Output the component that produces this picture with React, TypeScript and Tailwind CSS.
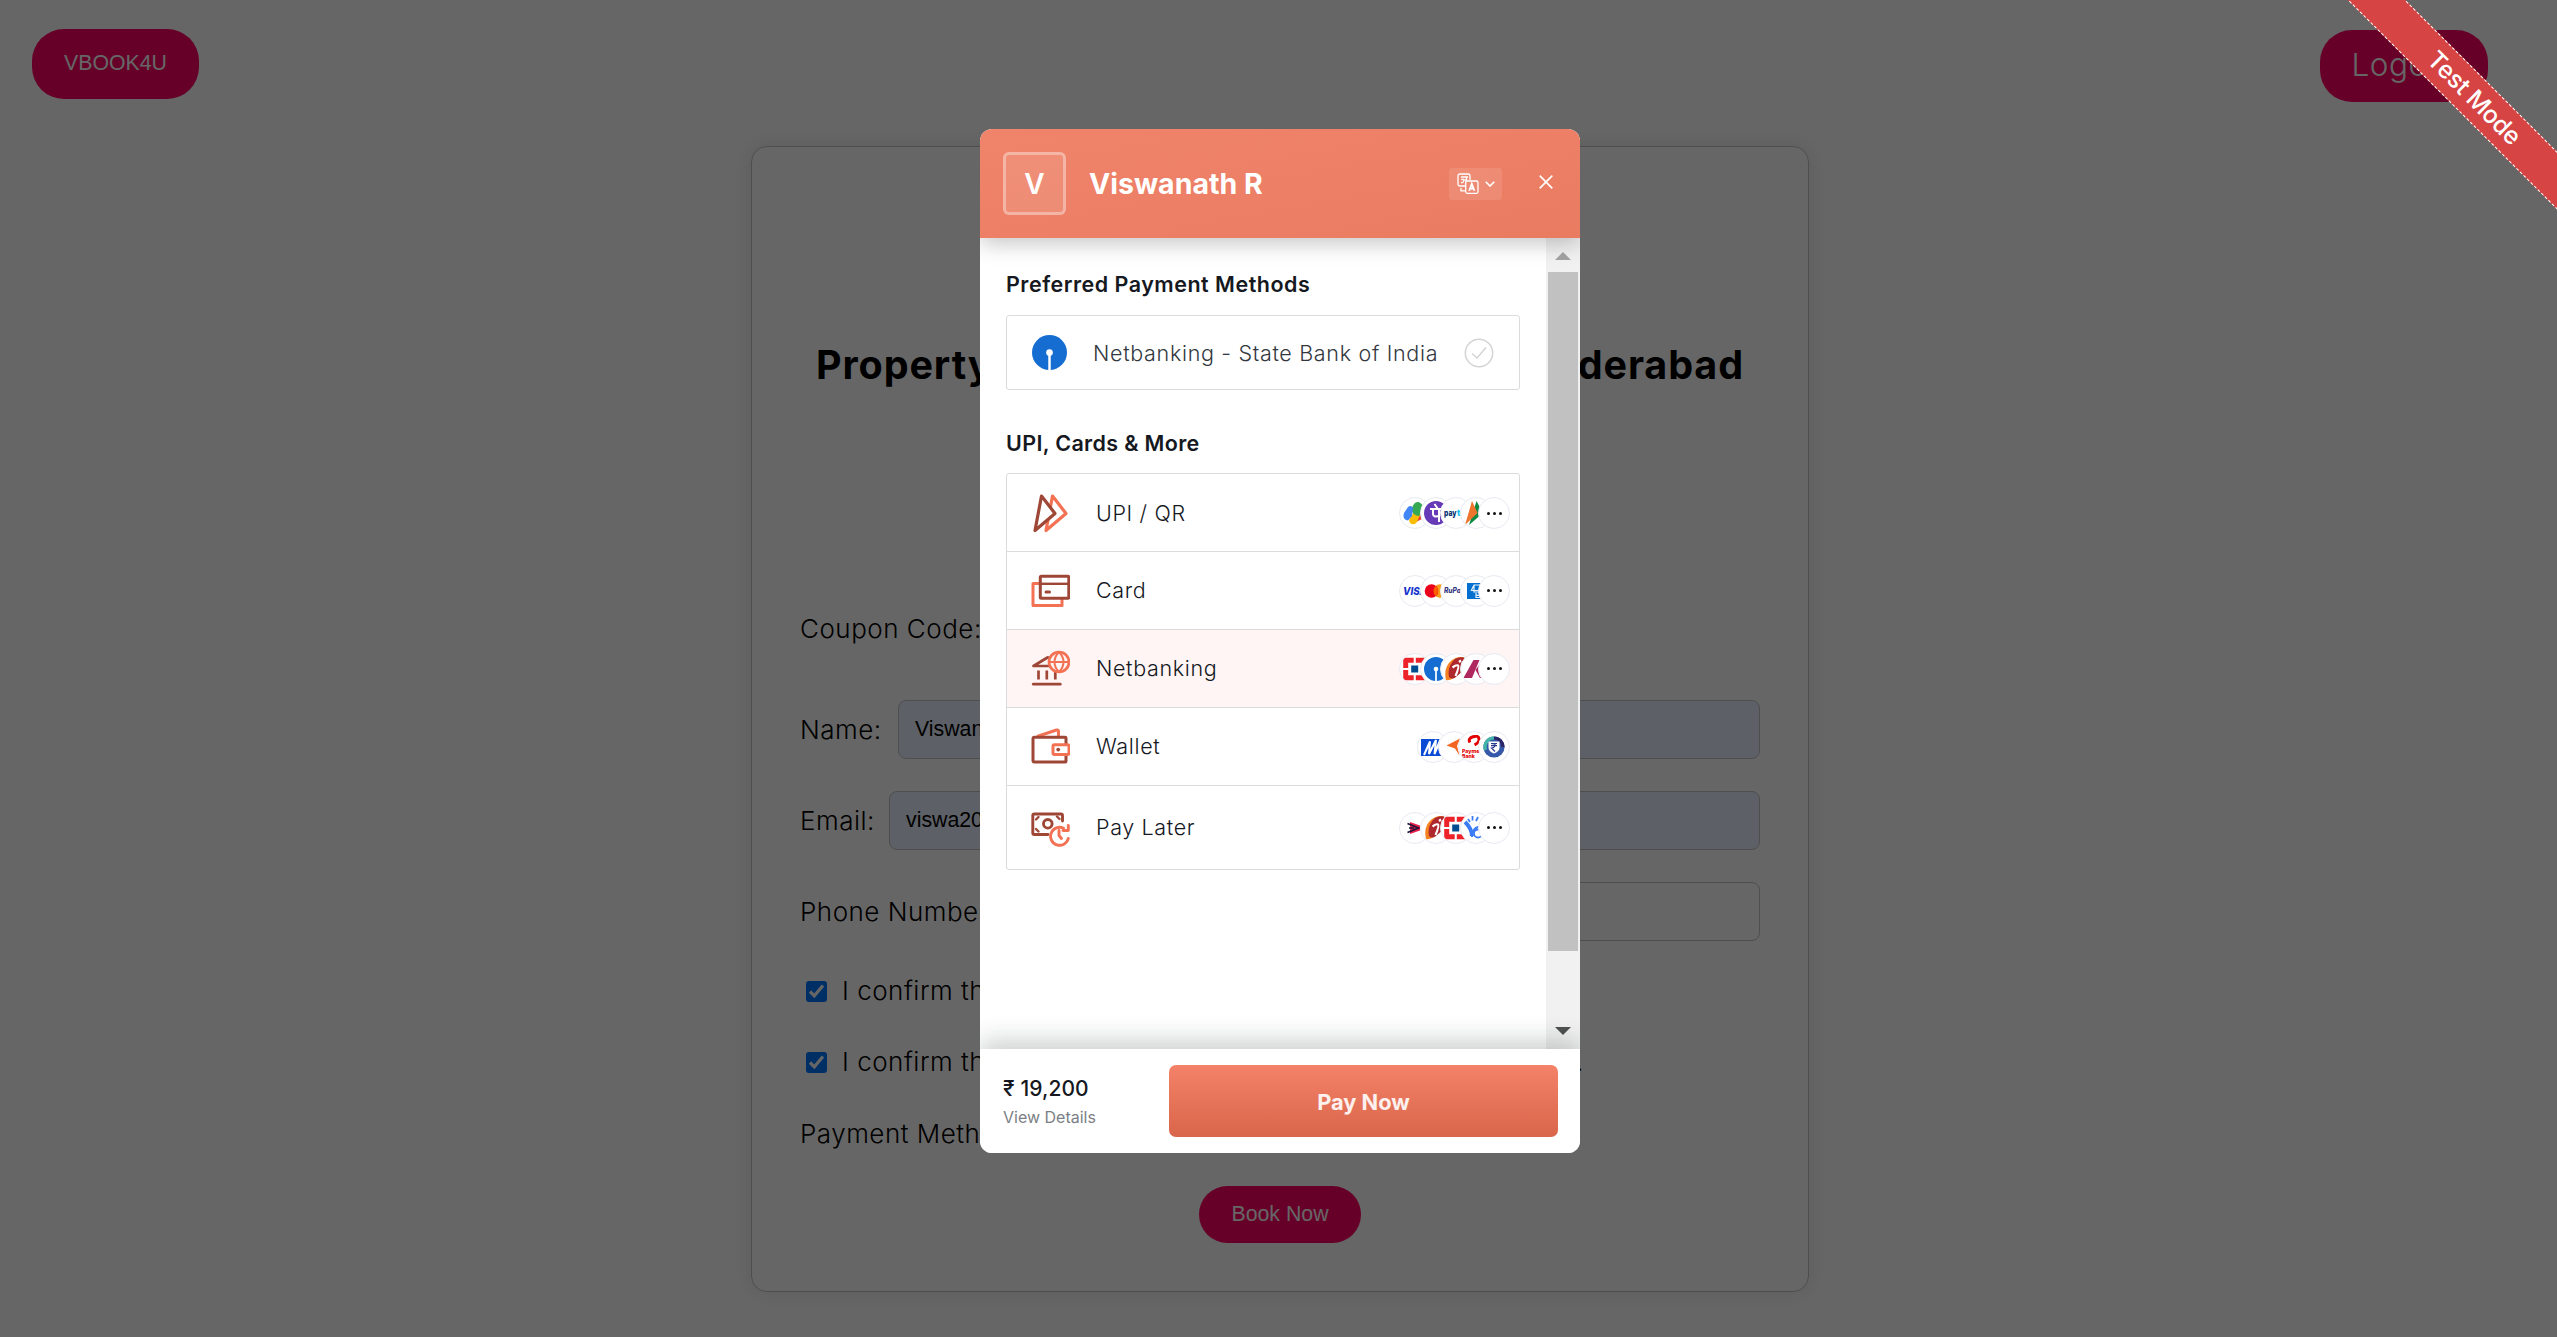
import React from "react";

const DK = "#9f4737";
const OR = "#f37254";

function Pill({ children, className }: { children: React.ReactNode; className: string }) {
  return (
    <div className={`flex items-center justify-center rounded-[32px] bg-[#ff0066] text-white ${className}`}>
      {children}
    </div>
  );
}

function Check() {
  return (
    <span className="flex size-[21px] items-center justify-center rounded-[3px] bg-[#0075ff]">
      <svg width="21" height="21" viewBox="0 0 21 21" fill="none" stroke="#fff" strokeWidth="3.200">
        <path d="M4 10.500l4.300 4.300L17 4.500" />
      </svg>
    </span>
  );
}

const label = "font-light text-[26px] leading-[38px] tracking-[0.5px] whitespace-nowrap";

function UpiIcon() {
  return (
    <svg width="40" height="40" viewBox="0 0 40 40" fill="none" strokeWidth="3.200" strokeLinejoin="round">
      <path d="M22.500 3L36 20.500 16 37.500z" stroke={OR} />
      <path d="M11.500 3L25 20.500 5 37.500z" stroke={DK} fill="#fff" />
    </svg>
  );
}
function CardIcon() {
  return (
    <svg width="40" height="40" viewBox="0 0 40 40" fill="none" strokeWidth="3" strokeLinejoin="round">
      <path d="M9 12.500H3V34.500H32V28" stroke={OR} />
      <rect x="10.300" y="5.300" width="28.500" height="22" rx="1" stroke={DK} />
      <path d="M10 12.800h29" stroke={DK} strokeWidth="2.400" />
      <path d="M16 21h3.500" stroke={DK} strokeLinecap="round" />
    </svg>
  );
}
function BankIcon() {
  return (
    <svg width="40" height="40" viewBox="0 0 40 40" fill="none" strokeWidth="2.700">
      <path d="M17.500 8.500L3.500 17H19M17.500 8.500h2" stroke={DK} strokeLinecap="round" strokeLinejoin="round" />
      <path d="M8.500 21.500v9M16.800 21.500v9M25.300 23v7.500" stroke={DK} />
      <path d="M3.300 35.200h27" stroke={DK} strokeLinecap="round" />
      <circle cx="29" cy="13" r="10" stroke={OR} />
      <path d="M19 13h20M29 3c-6 6-6 14 0 20M29 3c6 6 6 14 0 20" stroke={OR} strokeWidth="2" />
    </svg>
  );
}
function WalletIcon() {
  return (
    <svg width="40" height="40" viewBox="0 0 40 40" fill="none" strokeWidth="3" strokeLinejoin="round">
      <path d="M7 9.500L26.500 3Q28.500 2.500 28.500 4.500V10" stroke={OR} />
      <path d="M36 18V11Q36 10.300 35 10.300H4.500Q3 10.300 3 12V33.500Q3 35 4.500 35H35Q36 35 36 34V27" stroke={DK} />
      <rect x="23" y="17.700" width="16" height="9.800" rx="1.500" stroke={OR} />
      <circle cx="28.200" cy="22.600" r="1.900" fill={DK} />
    </svg>
  );
}
function LaterIcon() {
  return (
    <svg width="40" height="40" viewBox="0 0 40 40" fill="none" strokeWidth="2.900" strokeLinecap="round" strokeLinejoin="round">
      <path d="M18 26.500H4.300Q2.800 26.500 2.800 25V7.500Q2.800 6 4.300 6H31Q32.500 6 32.500 7.500V13" stroke={DK} />
      <circle cx="17.800" cy="15.800" r="4.300" stroke={DK} />
      <path d="M6 11.500L8.500 9M6 21L8.500 23.500M27 8.500L29.500 11" stroke={DK} strokeWidth="2.400" />
      <path d="M33.500 20.200A9 9 0 1 0 38.300 30.500" stroke={OR} />
      <path d="M38.300 17.500V22.500H33" stroke={OR} />
      <path d="M29 22.500V27.500L31.500 30.500" stroke={OR} />
    </svg>
  );
}

/* 24 x 24 brand marks drawn inside the round badges */
const marks: Record<string, React.ReactNode> = {
  gpay: (
    <g>
      <path d="M15 12L19 8v10l-6 3z" fill="#ea4335" />
      <path d="M6 19L12 9h7l-5 12q-3 4-7 1z" fill="#fbbc04" />
      <path d="M8 8L11 3q3-3.500 7-.5t1 7L16 15q-6 0-8-7z" fill="#34a853" />
      <path d="M1 12l4-6q3-2.500 5 1l-1 8-4 4.500q-6-1-4-7.500z" fill="#4285f4" />
    </g>
  ),
  phonepe: (
    <g>
      <circle cx="12" cy="12" r="12" fill="#673ab7" />
      <path d="M6 8H18M15 8V21M9 8V13q0 3.500 6 2M10.500 3l3.500 5" stroke="#fff" strokeWidth="2" fill="none" />
    </g>
  ),
  paytm: (
    <g fontFamily="Inter, sans-serif" fontWeight="800" fontSize="9">
      <text x="0" y="15" fill="#002e6e" textLength="12.500" lengthAdjust="spacingAndGlyphs">pay</text>
      <text x="13" y="15" fill="#00b9f1" textLength="11" lengthAdjust="spacingAndGlyphs">tm</text>
    </g>
  ),
  bhim: (
    <g>
      <path d="M12.500 0L19 12L5 24z" fill="#0e8a43" />
      <path d="M8 0L13.500 12L1 24z" fill="#ed752e" />
    </g>
  ),
  visa: (
    <text x="0" y="15.800" fontFamily="Inter, sans-serif" fontStyle="italic" fontWeight="800" fontSize="10.500" fill="#1434cb" textLength="24" lengthAdjust="spacingAndGlyphs">VISA</text>
  ),
  master: (
    <g>
      <circle cx="16" cy="12" r="6.800" fill="#f79e1b" />
      <circle cx="7.500" cy="12" r="6.800" fill="#eb001b" />
      <path d="M11.700 6.800a7 7 0 0 1 0 10.400a7 7 0 0 1 0-10.400z" fill="#ff5f00" />
    </g>
  ),
  rupay: (
    <text x="0" y="14" fontFamily="Inter, sans-serif" fontStyle="italic" fontWeight="800" fontSize="7" fill="#30347e" textLength="21" lengthAdjust="spacingAndGlyphs">RuPay</text>
  ),
  amex: (
    <g>
      <rect x="3" y="4" width="16" height="16" fill="#006fcf" />
      <path d="M7 12l3-6h6M10 6.500v6.500h6M8 11.500h8M12 14v4.500h5M12 16.300h4" stroke="#fff" strokeWidth="1.200" fill="none" opacity=".9" />
    </g>
  ),
  kotak: (
    <g>
      <path d="M2.700 11V3.200H10.700M12.800 3.200H20.800V11M20.800 13V20.800H12.800M10.700 20.800H2.700V13" stroke="#ed232a" strokeWidth="5" fill="none" />
      <rect x="8.200" y="8.500" width="7" height="7" fill="#004c8f" />
    </g>
  ),
  sbi: (
    <g>
      <circle cx="12" cy="12" r="12" fill="#156dd2" />
      <circle cx="12" cy="12" r="2.300" fill="#fff" />
      <path d="M12 13v11" stroke="#fff" strokeWidth="1.700" />
    </g>
  ),
  icici: (
    <g>
      <path d="M2 23Q-1 10 8 3Q14-1 20 0L13 18Q8 24 2 23z" fill="#f58220" />
      <path d="M5 20Q3 9 11 2Q16-1 21 1V12L12 20Q8 23 5 20z" fill="#ae282e" />
      <path d="M15 5l2-1.500M8.500 10.500q4-3 5.500-2T11.500 19" stroke="#fff" strokeWidth="2.200" fill="none" />
    </g>
  ),
  axis: (
    <g>
      <path d="M9.500 3H15.500L8 21H-.5z" fill="#ae275f" />
      <path d="M11.500 13L15 8 21 21H16z" fill="#ae275f" />
    </g>
  ),
  mobikwik: (
    <g>
      <path d="M0 4H22V21H0z" fill="#0a4bd6" />
      <path d="M3 20L9 6.500L8 19L15 5L13.500 19L20 3" stroke="#fff" strokeWidth="2" fill="none" />
    </g>
  ),
  freecharge: <path d="M4.500 10.500L18 3.500L15 11l2.500 9.500-4.500-7z" fill="#f26522" />,
  airtel: (
    <g>
      <path d="M8 7.500Q5.500 3.500 11 1.800t6 2-4.500 6" stroke="#e40000" strokeWidth="3" fill="none" />
      <g fontFamily="Inter, sans-serif" fontWeight="800" fontSize="5.200" fill="#e40000">
        <text x="0" y="17.500">Payments</text>
        <text x="0" y="22.800">Bank</text>
      </g>
    </g>
  ),
  payzapp: (
    <g>
      <circle cx="12" cy="12" r="10.600" fill="#3558a8" />
      <path d="M12 3A9 9 0 0 1 21 12" stroke="#2b2566" strokeWidth="3.200" fill="none" />
      <path d="M3.500 15A9 9 0 0 1 12 3" stroke="#42b5a8" strokeWidth="3.200" fill="none" />
      <path d="M6.500 6.500H17.500V13Q17 16.500 12 18.500Q7 16.500 6.500 13z" fill="#fff" />
      <path d="M9 8.500h6M9 10.700h6M9 8.500q5 0 4 2.200T9.500 13l3.500 3.500" stroke="#2b3a8f" strokeWidth="1.200" fill="none" />
    </g>
  ),
  lazy: (
    <g>
      <path d="M7 6L17 9.500v5L7 18z" fill="#e91e4f" />
      <path d="M4.500 7.500L15.500 12L4.500 16.500M6 12h5" stroke="#1b1233" strokeWidth="1.600" fill="none" />
    </g>
  ),
  yono: (
    <g stroke="#3b7cf5" fill="none">
      <path d="M4 3L6 6M8.500 0v4.500M14 1L12 5" strokeWidth="1.800" />
      <path d="M1 6q7 7 7 14" strokeWidth="4" />
      <circle cx="14" cy="17.500" r="4" strokeWidth="1.800" />
      <path d="M8 21Q8 10.500 18 10.500" strokeWidth="2" />
    </g>
  ),
};

function Badges({ names, more = true }: { names: string[]; more?: boolean }) {
  return (
    <div className="flex items-center">
      {names.map((n, i) => (
        <span
          key={n}
          className={`flex size-8 items-center justify-center overflow-hidden rounded-full border border-[#e8eaf2] bg-white ${i === 0 ? "" : i === 1 ? "-ml-[11px]" : "-ml-[12px]"}`}
        >
          <svg className="shrink-0" width="24" height="24" viewBox="0 0 24 24">{marks[n]}</svg>
        </span>
      ))}
      {more && (
        <span className="-ml-[14px] flex size-8 items-center justify-center gap-[3px] rounded-full border border-[#e8eaf2] bg-white">
          <i className="size-[3px] rounded-full bg-[#111]" />
          <i className="size-[3px] rounded-full bg-[#111]" />
          <i className="size-[3px] rounded-full bg-[#111]" />
        </span>
      )}
    </div>
  );
}

const rows = [
  { t: "UPI / QR", icon: <UpiIcon />, b: ["gpay", "phonepe", "paytm", "bhim"], more: true, h: "h-[77px] pt-px" },
  { t: "Card", icon: <CardIcon />, b: ["visa", "master", "rupay", "amex"], more: true, h: "h-[78px]" },
  { t: "Netbanking", icon: <BankIcon />, b: ["kotak", "sbi", "icici", "axis"], more: true, h: "h-[78px]" },
  { t: "Wallet", icon: <WalletIcon />, b: ["mobikwik", "freecharge", "airtel", "payzapp"], more: false, h: "h-[78px]" },
  { t: "Pay Later", icon: <LaterIcon />, b: ["lazy", "icici", "kotak", "yono"], more: true, h: "h-[84px]" },
];

function Page() {
  return (
    <div className="h-full bg-white">
      <header className="flex h-[146px] items-start justify-between pl-8 pr-[69px]">
        <Pill className="mt-[29px] h-[70px] w-[167px] pb-px font-['Liberation_Sans',sans-serif] text-[21.300px]">VBOOK4U</Pill>
        <Pill className="mt-[30px] h-[72px] w-[168px] pb-[2px] text-[31.500px] font-light tracking-[0.5px]">Logout</Pill>
      </header>
      <div className="ml-[751px] flex h-[1146px] w-[1058px] flex-col rounded-[16px] border border-[#c4c4c4] px-12 shadow-[0_0_20px_rgba(0,0,0,0.1)]">
        <h1 className="mt-[190px] flex h-[58px] items-center justify-between pl-[16px] pr-[16px] text-[39.500px] font-bold tracking-[0.9px]">
          <span>Property</span>
          <span>Hyderabad</span>
        </h1>
        <div className={`mt-[215px] ${label}`}>Coupon Code:</div>
        <div className="mt-[52px] flex h-[59px] items-center justify-between">
          <span className={label}>Name:</span>
          <div className="flex h-full w-[862px] items-center rounded-[8px] border border-[#c4c4c4] bg-[#e8f0fe] px-4 font-['Liberation_Sans',sans-serif] text-[21.300px]">Viswanath</div>
        </div>
        <div className="mt-[32px] flex h-[59px] items-center justify-between">
          <span className={label}>Email:</span>
          <div className="flex h-full w-[871px] items-center rounded-[8px] border border-[#c4c4c4] bg-[#e8f0fe] px-4 font-['Liberation_Sans',sans-serif] text-[21.300px]">viswa20</div>
        </div>
        <div className="mt-[32px] flex h-[59px] items-center justify-between">
          <span className={label}>Phone Number:</span>
          <div className="h-full w-[760px] rounded-[8px] border border-[#c4c4c4] bg-white" />
        </div>
        <div className="mt-[31px] flex h-[38px] items-center gap-[15px] pl-[6px]">
          <Check />
          <span className={label}>I confirm that</span>
        </div>
        <div className="mt-[33px] flex h-[38px] items-center gap-[15px] pl-[6px]">
          <Check />
          <span className={label}>I confirm that</span>
          <span className={`ml-auto w-[184px] ${label}`}>.</span>
        </div>
        <div className={`mt-[34px] ${label}`}>Payment Method:</div>
        <Pill className="mt-[33px] h-[57px] w-[162px] self-center font-['Liberation_Sans',sans-serif] text-[21.300px]">Book Now</Pill>
      </div>
    </div>
  );
}

function Modal() {
  return (
    <div className="flex h-[1024px] w-[600px] flex-col overflow-hidden rounded-[12px] bg-white text-[#15181e]">
      <div className="relative z-10 flex h-[109px] items-center bg-linear-to-br from-[#f0846a] to-[#e97b61] pl-[23px] pr-[27px] text-white shadow-[0_6px_20px_rgba(0,0,0,0.22)]">
        <div className="flex size-[63px] items-center justify-center rounded-[6px] border-3 border-white/35 bg-white/10 text-[28px] font-semibold">V</div>
        <div className="ml-[23px] pt-px text-[28.500px] font-bold">Viswanath R</div>
        <div className="ml-auto flex h-8 w-[53px] items-center gap-[6px] rounded-[3px] bg-white/10 pl-2">
          <svg width="22" height="22" viewBox="0 0 22 22" fill="none" stroke="#fff" strokeWidth="1.300">
            <path d="M8 13H3Q1 13 1 11V3Q1 1 3 1H11Q13 1 13 3V7" />
            <rect x="8.700" y="8" width="12.300" height="12.300" rx="1.500" />
            <path d="M4 4h7M9.500 4v4M4 6.500q3-1 2.500 1.200Q7 10 4 9.500M6.500 7H9" />
            <path d="M4 15v2.800h4" />
            <path d="M12.200 17.800l2.600-7 2.600 7M13 15.500h3.600" strokeWidth="1.800" />
          </svg>
          <svg width="10" height="6" viewBox="0 0 10 6" fill="none" stroke="#fff" strokeWidth="1.600"><path d="M.7.700L5 5 9.300.700" /></svg>
        </div>
        <svg className="-mt-1 ml-[37px]" width="14" height="14" viewBox="0 0 14 14" fill="none" stroke="#fff" strokeWidth="1.700"><path d="M.7.700l12.600 12.600M13.300.700L.7 13.300" /></svg>
      </div>

      <div className="flex h-[811px]">
        <div className="w-[566px] px-[26px]">
          <h2 className="mt-[32px] h-[28px] text-[21.500px] font-semibold leading-[28px] tracking-[0.5px]">Preferred Payment Methods</h2>
          <div className="mt-[17px] flex h-[75px] items-center rounded-[3px] border border-[#d9dbdd] pl-[25px] pr-[25px]">
            <svg width="35" height="35" viewBox="0 0 24 24">{marks.sbi}</svg>
            <span className="ml-[26px] pt-px text-[21.500px] font-[350] tracking-[0.68px] text-[#33383f]">Netbanking - State Bank of India</span>
            <svg className="ml-auto" width="30" height="30" viewBox="0 0 30 30" fill="none" stroke="#d2d4d6" strokeWidth="1.500">
              <circle cx="15" cy="15" r="13.700" />
              <path d="M8 15.500l5 4.500 9-10.500" />
            </svg>
          </div>
          <h2 className="mt-[39px] h-[28px] text-[21.500px] font-semibold leading-[28px] tracking-[0.35px]">UPI, Cards &amp; More</h2>
          <div className="mt-[16px] rounded-[3px] border border-[#d9dbdd]">
            {rows.map((r, i) => (
              <div key={r.t} className={`flex items-center pl-[23px] pr-[9px] ${r.h} ${i ? "border-t border-[#d9dbdd]" : ""} ${i === 2 ? "bg-[#fef5f4]" : ""}`}>
                {r.icon}
                <span className="ml-[26px] mr-auto text-[21.500px] font-[350] tracking-[0.65px]">{r.t}</span>
                <Badges names={r.b} more={r.more} />
              </div>
            ))}
          </div>
        </div>
        <div className="flex w-[34px] flex-col items-center bg-[#f1f1f1]">
          <svg className="mt-[14px] shrink-0" width="16" height="8"><path d="M0 8L8 0l8 8z" fill="#a3a3a3" /></svg>
          <div className="mt-3 h-[679px] w-[30px] shrink-0 bg-[#c1c1c1]" />
          <svg className="mt-[76px] shrink-0" width="16" height="8"><path d="M0 0h16L8 8z" fill="#505050" /></svg>
        </div>
      </div>

      <div className="relative z-10 flex h-[104px] items-center bg-white pl-[23px] pr-[22px] shadow-[0_-8px_24px_rgba(20,35,30,0.22)]">
        <div className="pt-[2px]">
          <div className="text-[21px] font-medium leading-[28px] tracking-[0.1px]">₹ 19,200</div>
          <div className="mt-[2px] text-[16px] leading-[24px] text-[#7b7f85]">View Details</div>
        </div>
        <div className="ml-auto flex h-[72px] w-[389px] items-center justify-center rounded-[7px] bg-linear-to-b from-[#f48268] to-[#d9664b] pt-0.5 text-[21.800px] font-bold text-white/90">Pay Now</div>
      </div>
    </div>
  );
}

export default function App() {
  return (
    <div className="relative h-[1337px] w-[2557px] overflow-hidden font-[Inter,sans-serif] text-black">
      <Page />
      <div className="absolute inset-0 flex justify-center bg-black/60 pl-[3px] pt-[129px]">
        <Modal />
      </div>
      <div className="absolute left-[2283px] top-[76px] flex h-[41px] w-[380px] rotate-45 items-center justify-center border-y border-dashed border-white bg-[#d64444] pl-1 text-[24.500px] font-medium tracking-[-0.3px] text-white">
        Test Mode
      </div>
    </div>
  );
}
